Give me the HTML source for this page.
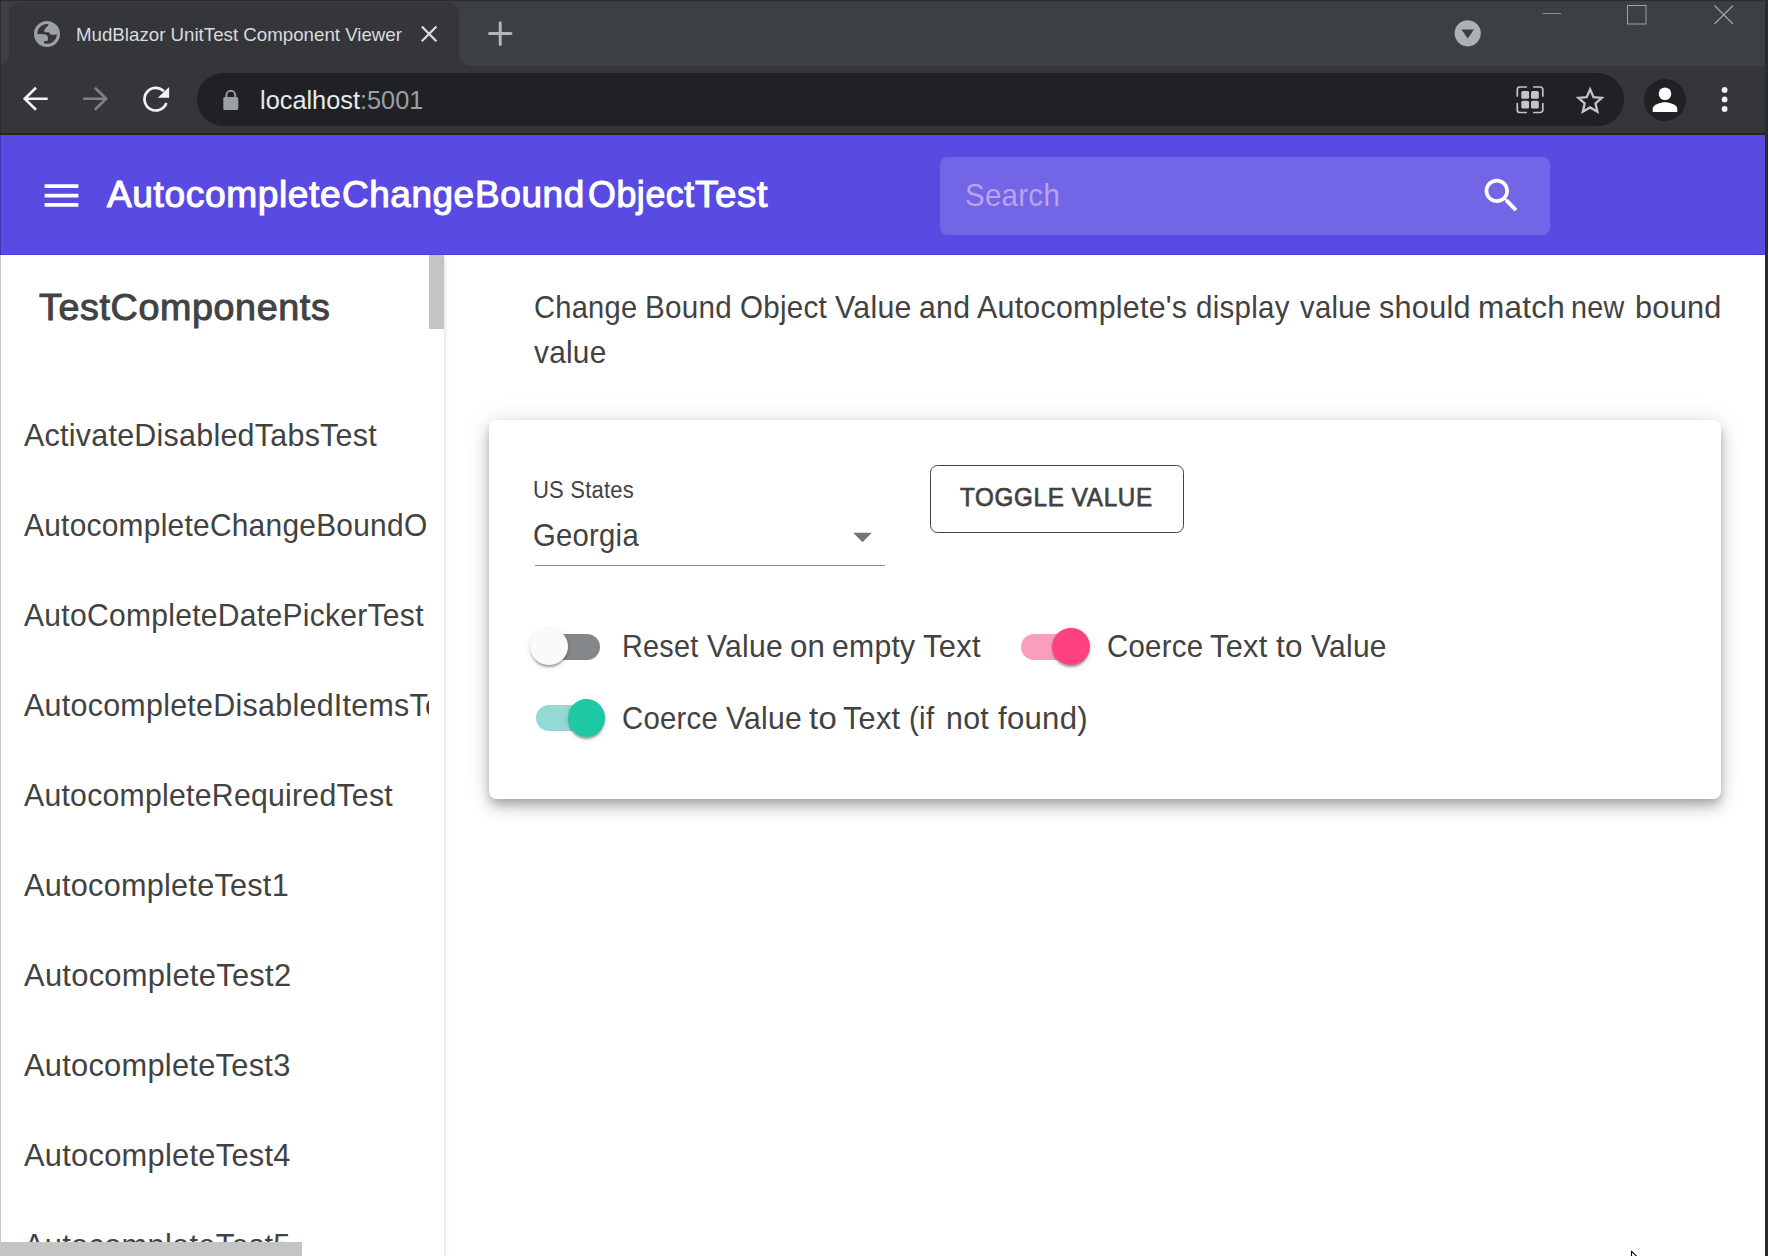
<!DOCTYPE html>
<html lang="en">
<head>
<meta charset="utf-8">
<title>MudBlazor UnitTest Component Viewer</title>
<style>
*{box-sizing:border-box;margin:0;padding:0}
html,body{width:1768px;height:1256px;overflow:hidden;background:#fff}
body{position:relative;font-family:"Liberation Sans",sans-serif;color:#424242}
.abs{position:absolute}
.t{position:absolute;white-space:nowrap;line-height:1;transform-origin:0 0;display:block}
svg{position:absolute;overflow:visible}

/* ---------- browser chrome ---------- */
#frame{left:0;top:0;width:1768px;height:66px;background:#3c4043}
#topline{left:0;top:0;width:1768px;height:2px;background:linear-gradient(#2b2e31 0,#2b2e31 55%,#383c3f 55%)}
#tab{left:9px;top:2px;width:450px;height:64px;background:#35363a;border-radius:12px 12px 0 0}
.foot{width:12px;height:12px;top:54px;background:#35363a}
.foot i{position:absolute;left:0;top:0;width:12px;height:12px;background:#3c4043}
#footl{left:-3px}#footl i{border-bottom-right-radius:12px}
#footr{left:459px}#footr i{border-bottom-left-radius:12px}
#toolbar{left:0;top:66px;width:1768px;height:67px;background:#35363a}
#tbline{left:0;top:133px;width:1768px;height:2px;background:#232427}
#omni{left:197px;top:73px;width:1427px;height:53px;border-radius:27px;background:#202124}
#avatar{left:1644px;top:78.5px;width:42px;height:42px;border-radius:50%;background:#202124}
#lborder{left:0;top:0;width:1px;height:134px;background:#2c2e31}
#rborder{left:1765px;top:0;width:3px;height:1256px;background:#2b2b2d}

#url b{font-weight:400;color:#9aa0a6}

/* ---------- app ---------- */
#appbar{left:0;top:134.5px;width:1765px;height:120px;background:#594ae2;border-bottom:1px solid #4c3cde}
#search{left:940px;top:157px;width:610px;height:78px;border-radius:7.5px;background:#7366e6}

#drawer{left:0;top:254.5px;width:444px;height:1002px;background:#fff;box-shadow:0 4px 2px -2px rgba(0,0,0,.2),0 2px 2px 0 rgba(0,0,0,.14),0 2px 6px 0 rgba(0,0,0,.12)}
#lline{left:0;top:254.5px;width:1px;height:1002px;background:#c8c8c8}
#lline2{left:0;top:134px;width:1px;height:121px;background:rgba(0,0,40,.25)}
#dclip{left:0;top:254.5px;width:429px;height:987.5px;overflow:hidden}
#vthumb{left:429px;top:255px;width:15px;height:74px;background:#c4c4c4}
#hthumb{left:0;top:1242px;width:302px;height:14px;background:#c4c4c4}


#card{left:489px;top:420px;width:1232px;height:379px;border-radius:7.5px;background:#fff;box-shadow:0 5.6px 9.4px -1.9px rgba(0,0,0,.2),0 9.4px 15px 0 rgba(0,0,0,.14),0 1.9px 26.25px 0 rgba(0,0,0,.12)}
#uline{left:534.5px;top:564.5px;width:350.5px;height:1.5px;background:#8f8f8f}
#btn{left:930px;top:465px;width:253.5px;height:68px;border:1px solid #424242;border-radius:7.5px}
.track{width:64px;height:26px;border-radius:13px}
.thumb{width:37.5px;height:37.5px;border-radius:50%;box-shadow:0 4px 2px -2px rgba(0,0,0,.2),0 2px 2px 0 rgba(0,0,0,.14),0 2px 6px 0 rgba(0,0,0,.12)}
/*TXT-BEGIN*/
#tabtitle{left:75.86px;top:25.13px;font-size:19px;transform:scaleX(0.9841);color:#d9dbdf}
#url{left:260.29px;top:86.99px;font-size:26px;transform:scaleX(0.9743);color:#e8eaed}
#searchph{left:964.82px;top:180.41px;font-size:31.4px;letter-spacing:0.28px;transform:scaleX(0.9398);color:#b9a3ea}
#dtitle{left:39.43px;top:34.37px;font-size:37px;letter-spacing:0.6px;transform:scaleX(1.0185);-webkit-text-stroke:1px #424242}
#li1{left:23.99px;top:165.41px;font-size:31.4px;letter-spacing:0.28px;transform:scaleX(0.9686);}
#li2{left:23.99px;top:255.41px;font-size:31.4px;letter-spacing:0.28px;transform:scaleX(0.9518);}
#li3{left:23.99px;top:345.41px;font-size:31.4px;letter-spacing:0.28px;transform:scaleX(0.9580);}
#li4{left:23.99px;top:435.41px;font-size:31.4px;letter-spacing:0.28px;transform:scaleX(0.9692);}
#li5{left:23.99px;top:525.41px;font-size:31.4px;letter-spacing:0.28px;transform:scaleX(0.9617);}
#li6{left:23.99px;top:615.41px;font-size:31.4px;letter-spacing:0.28px;transform:scaleX(0.9750);}
#li7{left:23.99px;top:705.41px;font-size:31.4px;letter-spacing:0.28px;transform:scaleX(0.9839);}
#li8{left:23.99px;top:795.41px;font-size:31.4px;letter-spacing:0.28px;transform:scaleX(0.9809);}
#li9{left:23.99px;top:885.41px;font-size:31.4px;letter-spacing:0.28px;transform:scaleX(0.9818);}
#li10{left:23.99px;top:975.41px;font-size:31.4px;letter-spacing:0.28px;transform:scaleX(0.9818);}
#p2{left:534.47px;top:337.41px;font-size:31.4px;letter-spacing:0.28px;transform:scaleX(0.9484);}
#lbl{left:532.63px;top:479.13px;font-size:23.5px;letter-spacing:0.2px;transform:scaleX(0.9372);}
#val{left:533.34px;top:519.89px;font-size:31.4px;letter-spacing:0.28px;transform:scaleX(0.9321);}
#btntxt{left:960.22px;top:484.37px;font-size:26.4px;letter-spacing:0.75px;transform:scaleX(0.9161);-webkit-text-stroke:.75px #424242}
#at1{left:106.63px;top:176.45px;font-size:37.5px;letter-spacing:0.6px;transform:scaleX(0.9901);color:#fff;-webkit-text-stroke:1.1px #fff}
#at2{left:342.41px;top:176.45px;font-size:37.5px;letter-spacing:0.6px;transform:scaleX(0.9831);color:#fff;-webkit-text-stroke:1.1px #fff}
#at3{left:475.45px;top:176.45px;font-size:37.5px;letter-spacing:0.6px;transform:scaleX(0.9853);color:#fff;-webkit-text-stroke:1.1px #fff}
#at4{left:587.80px;top:176.45px;font-size:37.5px;letter-spacing:0.6px;transform:scaleX(0.9539);color:#fff;-webkit-text-stroke:1.1px #fff}
#at5{left:694.70px;top:176.45px;font-size:37.5px;letter-spacing:0.6px;transform:scaleX(1.0277);color:#fff;-webkit-text-stroke:1.1px #fff}
#p1a{left:534.00px;top:291.89px;font-size:31.4px;letter-spacing:0.28px;transform:scaleX(0.9262);}
#p1b{left:645.35px;top:291.89px;font-size:31.4px;letter-spacing:0.28px;transform:scaleX(0.9440);}
#p1c{left:739.90px;top:291.89px;font-size:31.4px;letter-spacing:0.28px;transform:scaleX(0.9412);}
#p1d{left:834.70px;top:291.89px;font-size:31.4px;letter-spacing:0.28px;transform:scaleX(0.9663);}
#p1e{left:918.60px;top:291.89px;font-size:31.4px;letter-spacing:0.28px;transform:scaleX(0.9633);}
#p1f{left:977.20px;top:291.89px;font-size:31.4px;letter-spacing:0.28px;transform:scaleX(0.9667);}
#p1g{left:1195.84px;top:291.89px;font-size:31.4px;letter-spacing:0.28px;transform:scaleX(0.9399);}
#p1h{left:1299.75px;top:291.89px;font-size:31.4px;letter-spacing:0.28px;transform:scaleX(0.9324);}
#p1i{left:1378.96px;top:291.89px;font-size:31.4px;letter-spacing:0.28px;transform:scaleX(0.9743);}
#p1j{left:1478.10px;top:291.89px;font-size:31.4px;letter-spacing:0.28px;transform:scaleX(1.0025);}
#p1k{left:1570.90px;top:291.89px;font-size:31.4px;letter-spacing:0.28px;transform:scaleX(0.9146);}
#p1l{left:1635.20px;top:291.89px;font-size:31.4px;letter-spacing:0.28px;transform:scaleX(0.9761);}
#sl1a{left:621.50px;top:631.41px;font-size:31.4px;letter-spacing:0.28px;transform:scaleX(0.9183);}
#sl1b{left:706.66px;top:631.41px;font-size:31.4px;letter-spacing:0.28px;transform:scaleX(0.9590);}
#sl1c{left:789.70px;top:631.41px;font-size:31.4px;letter-spacing:0.28px;transform:scaleX(0.9935);}
#sl1d{left:831.60px;top:631.41px;font-size:31.4px;letter-spacing:0.28px;transform:scaleX(0.9601);}
#sl1e{left:922.50px;top:631.41px;font-size:31.4px;letter-spacing:0.28px;transform:scaleX(0.9856);}
#sl2a{left:1106.60px;top:631.41px;font-size:31.4px;letter-spacing:0.28px;transform:scaleX(0.9367);}
#sl2b{left:1209.64px;top:631.41px;font-size:31.4px;letter-spacing:0.28px;transform:scaleX(0.9789);}
#sl2c{left:1275.59px;top:631.41px;font-size:31.4px;letter-spacing:0.28px;transform:scaleX(1.0007);}
#sl2d{left:1310.66px;top:631.41px;font-size:31.4px;letter-spacing:0.28px;transform:scaleX(0.9550);}
#sl3a{left:622.30px;top:702.91px;font-size:31.4px;letter-spacing:0.28px;transform:scaleX(0.9337);}
#sl3b{left:725.94px;top:702.91px;font-size:31.4px;letter-spacing:0.28px;transform:scaleX(0.9590);}
#sl3c{left:808.69px;top:702.91px;font-size:31.4px;letter-spacing:0.28px;transform:scaleX(1.0476);}
#sl3d{left:842.60px;top:702.91px;font-size:31.4px;letter-spacing:0.28px;transform:scaleX(0.9752);}
#sl3e{left:909.10px;top:702.91px;font-size:31.4px;letter-spacing:0.28px;transform:scaleX(0.9390);}
#sl3f{left:946.07px;top:702.91px;font-size:31.4px;letter-spacing:0.28px;transform:scaleX(0.9661);}
#sl3g{left:997.78px;top:702.91px;font-size:31.4px;letter-spacing:0.28px;transform:scaleX(0.9913);}
/*TXT-END*/
</style>
</head>
<body>
<!-- browser chrome -->
<div id="frame" class="abs"></div>
<div id="topline" class="abs"></div>
<div id="footl" class="abs foot"><i></i></div>
<div id="footr" class="abs foot"><i></i></div>
<div id="tab" class="abs"></div>
<div id="toolbar" class="abs"></div>
<div id="tbline" class="abs"></div>
<div id="omni" class="abs"></div>
<div id="avatar" class="abs"></div>
<span id="tabtitle" class="t">MudBlazor UnitTest Component Viewer</span>
<span id="url" class="t">localhost<b>:5001</b></span>
<svg id="ci" style="left:0;top:0" width="1768" height="134" viewBox="0 0 1768 134">
<!-- favicon globe -->
<circle cx="47" cy="34" r="13" fill="#9aa0a6"/>
<path fill="#35363a" d="M37.300 34.100A9.800 9.800 0 0 1 48.650 24.200L48 25.800 46.100 27.400 44.800 29 44.200 30.900 44.800 32.200 48.600 32.300 49.900 33.400 50.900 34.400 52.500 35 54.700 34.700 56.800 33.900A9.800 9.800 0 0 1 43.900 43.300L44.200 41.100 47.400 40.900 47.900 39.500 48 37.600 47.400 36 46.100 34.700 44.200 34.200z"/>
<!-- tab close -->
<path d="M421.8 26.4l14.6 14.8M436.4 26.4l-14.6 14.8" stroke="#dcdee1" stroke-width="2.2" fill="none"/>
<!-- new tab -->
<path d="M489.5 33.6h21.5M500.2 22.8v21.6" stroke="#b3b5b8" stroke-width="3" stroke-linecap="round" fill="none"/>
<!-- tab search -->
<circle cx="1467.7" cy="33.3" r="13.1" fill="#adb0b4"/>
<path d="M1461.4 29.6h12.6l-6.3 8.9z" fill="#3c4043"/>
<!-- window controls -->
<path d="M1542.5 13.5h18.5" stroke="#8b8d90" stroke-width="1" fill="none"/>
<rect x="1627.5" y="5.500" width="18.5" height="18.5" stroke="#a3a19f" stroke-width="1" fill="none"/>
<path d="M1714.5 5.500l18.5 18.5M1733 5.500l-18.5 18.5" stroke="#a6a8ab" stroke-width="1.100" fill="none"/>
<!-- back / forward -->
<path d="M47.700 98.800H25M36 87.800L24.700 98.800l11.300 11" stroke="#f1f3f4" stroke-width="2.600" fill="none" stroke-linejoin="miter"/>
<path d="M83.200 98.800h22.700M94.900 87.800l11.300 11-11.300 11" stroke="#7f8184" stroke-width="2.600" fill="none" stroke-linejoin="miter"/>
<!-- reload -->
<path d="M163.900 91.300A11.300 11.300 0 1 0 166.400 103" stroke="#f1f3f4" stroke-width="2.700" fill="none"/>
<path d="M169.100 87v10.800h-11.300z" fill="#f1f3f4"/>
<!-- lock -->
<rect x="223.300" y="97" width="15" height="13" rx="1.600" fill="#9aa0a6"/>
<path d="M226.400 98v-2.800a4.400 4.400 0 0 1 8.800 0V98" stroke="#9aa0a6" stroke-width="2" fill="none"/>
<!-- qr -->
<g stroke="#c3c5c8" stroke-width="1.700" fill="none" stroke-linecap="round">
<path d="M1517.300 96v-6.500a2.500 2.500 0 0 1 2.500-2.500h6.500M1533.800 87h6.500a2.500 2.500 0 0 1 2.500 2.500v6.500M1542.800 103.500v6.500a2.500 2.500 0 0 1-2.500 2.500h-6.500M1526.300 112.500h-6.500a2.500 2.500 0 0 1-2.500-2.500v-6.500"/>
</g>
<g fill="#c3c5c8"><rect x="1521.300" y="91" width="7.800" height="7.800" rx="1.500"/><rect x="1531" y="91" width="7.800" height="7.800" rx="1.500"/><rect x="1521.300" y="100.700" width="7.800" height="7.800" rx="1.500"/><rect x="1531" y="100.700" width="7.800" height="7.800" rx="1.500"/></g>
<!-- star -->
<path d="M1590.100 89.300l3.400 7.800 8.300.8-6.300 5.600 1.900 8.200-7.300-4.300-7.300 4.300 1.900-8.200-6.300-5.600 8.300-.8z" stroke="#c3c5c8" stroke-width="2.300" fill="none" stroke-linejoin="miter"/>
<!-- person -->
<circle cx="1665" cy="93.800" r="6.300" fill="#fff"/>
<path d="M1652.700 111.900v-3.200c0-4.200 8.200-6.400 12.300-6.400s12.300 2.200 12.300 6.400v3.200z" fill="#fff"/>
<!-- menu dots -->
<circle cx="1724.600" cy="89.900" r="2.900" fill="#f1f3f4"/><circle cx="1724.600" cy="99.400" r="2.900" fill="#f1f3f4"/><circle cx="1724.600" cy="109" r="2.900" fill="#f1f3f4"/>
</svg>

<!-- app -->
<div id="drawer" class="abs"></div>
<div id="dclip" class="abs">
<span id="dtitle" class="t">TestComponents</span>
<span id="li1" class="t li">ActivateDisabledTabsTest</span>
<span id="li2" class="t li">AutocompleteChangeBoundObjectTest</span>
<span id="li3" class="t li">AutoCompleteDatePickerTest</span>
<span id="li4" class="t li">AutocompleteDisabledItemsTest</span>
<span id="li5" class="t li">AutocompleteRequiredTest</span>
<span id="li6" class="t li">AutocompleteTest1</span>
<span id="li7" class="t li">AutocompleteTest2</span>
<span id="li8" class="t li">AutocompleteTest3</span>
<span id="li9" class="t li">AutocompleteTest4</span>
<span id="li10" class="t li">AutocompleteTest5</span>
</div>
<div id="vthumb" class="abs"></div>
<div id="hthumb" class="abs"></div>

<span id="p1a" class="t">Change </span><span id="p1b" class="t">Bound </span><span id="p1c" class="t">Object </span><span id="p1d" class="t">Value </span><span id="p1e" class="t">and </span><span id="p1f" class="t">Autocomplete's </span><span id="p1g" class="t">display </span><span id="p1h" class="t">value </span><span id="p1i" class="t">should </span><span id="p1j" class="t">match </span><span id="p1k" class="t">new </span><span id="p1l" class="t">bound</span>
<span id="p2" class="t">value</span>

<div id="card" class="abs"></div>
<span id="lbl" class="t">US States</span>
<span id="val" class="t">Georgia</span>
<div id="uline" class="abs"></div>
<div id="btn" class="abs"></div>
<span id="btntxt" class="t">TOGGLE VALUE</span>
<div class="abs track" style="left:536px;top:634px;background:#83878a"></div>
<div class="abs thumb" style="left:530px;top:627.8px;background:#fafafa"></div>
<span id="sl1a" class="t">Reset </span><span id="sl1b" class="t">Value </span><span id="sl1c" class="t">on </span><span id="sl1d" class="t">empty </span><span id="sl1e" class="t">Text</span>
<div class="abs track" style="left:1021px;top:634px;background:#fa9fbb"></div>
<div class="abs thumb" style="left:1052.2px;top:627.8px;background:#ff4081"></div>
<span id="sl2a" class="t">Coerce </span><span id="sl2b" class="t">Text </span><span id="sl2c" class="t">to </span><span id="sl2d" class="t">Value</span>
<div class="abs track" style="left:536px;top:705px;background:#94d9d3"></div>
<div class="abs thumb" style="left:567.5px;top:699.2px;background:#1ec8a5"></div>
<span id="sl3a" class="t">Coerce </span><span id="sl3b" class="t">Value </span><span id="sl3c" class="t">to </span><span id="sl3d" class="t">Text </span><span id="sl3e" class="t">(if </span><span id="sl3f" class="t">not </span><span id="sl3g" class="t">found)</span>
<svg style="left:839.5px;top:513.5px" width="45" height="45" viewBox="0 0 24 24"><path d="M7 10l5 5 5-5z" fill="#757575"/></svg>

<div id="appbar" class="abs"></div>
<div id="lline" class="abs"></div>
<div id="lline2" class="abs"></div>
<div id="search" class="abs"></div>
<span id="at1" class="t">Autocomplete</span><span id="at2" class="t">Change</span><span id="at3" class="t">Bound</span><span id="at4" class="t">Object</span><span id="at5" class="t">Test</span>
<span id="searchph" class="t">Search</span>
<svg style="left:39.4px;top:173px" width="45" height="45" viewBox="0 0 24 24"><path d="M3 18h18v-2H3v2zm0-5h18v-2H3v2zm0-7v2h18V6H3z" fill="#fff"/></svg>
<svg style="left:1478.8px;top:172.6px" width="45" height="45" viewBox="0 0 24 24"><path d="M15.5 14h-.79l-.28-.27C15.41 12.59 16 11.11 16 9.5 16 5.91 13.09 3 9.5 3S3 5.91 3 9.5 5.91 16 9.5 16c1.61 0 3.09-.59 4.23-1.57l.27.28v.79l5 4.99L20.49 19l-4.99-5zm-6 0C7.01 14 5 11.99 5 9.5S7.01 5 9.5 5 14 7.01 14 9.5 11.99 14 9.5 14z" fill="#fff"/></svg>

<svg style="left:1626px;top:1246px" width="16" height="10" viewBox="1626 1246 16 10"><path d="M1631.500 1251.300V1257L1637.500 1257z" fill="#fff" stroke="#111" stroke-width="1.100"/></svg>
<div id="lborder" class="abs"></div>
<div id="rborder" class="abs"></div>
</body>
</html>
